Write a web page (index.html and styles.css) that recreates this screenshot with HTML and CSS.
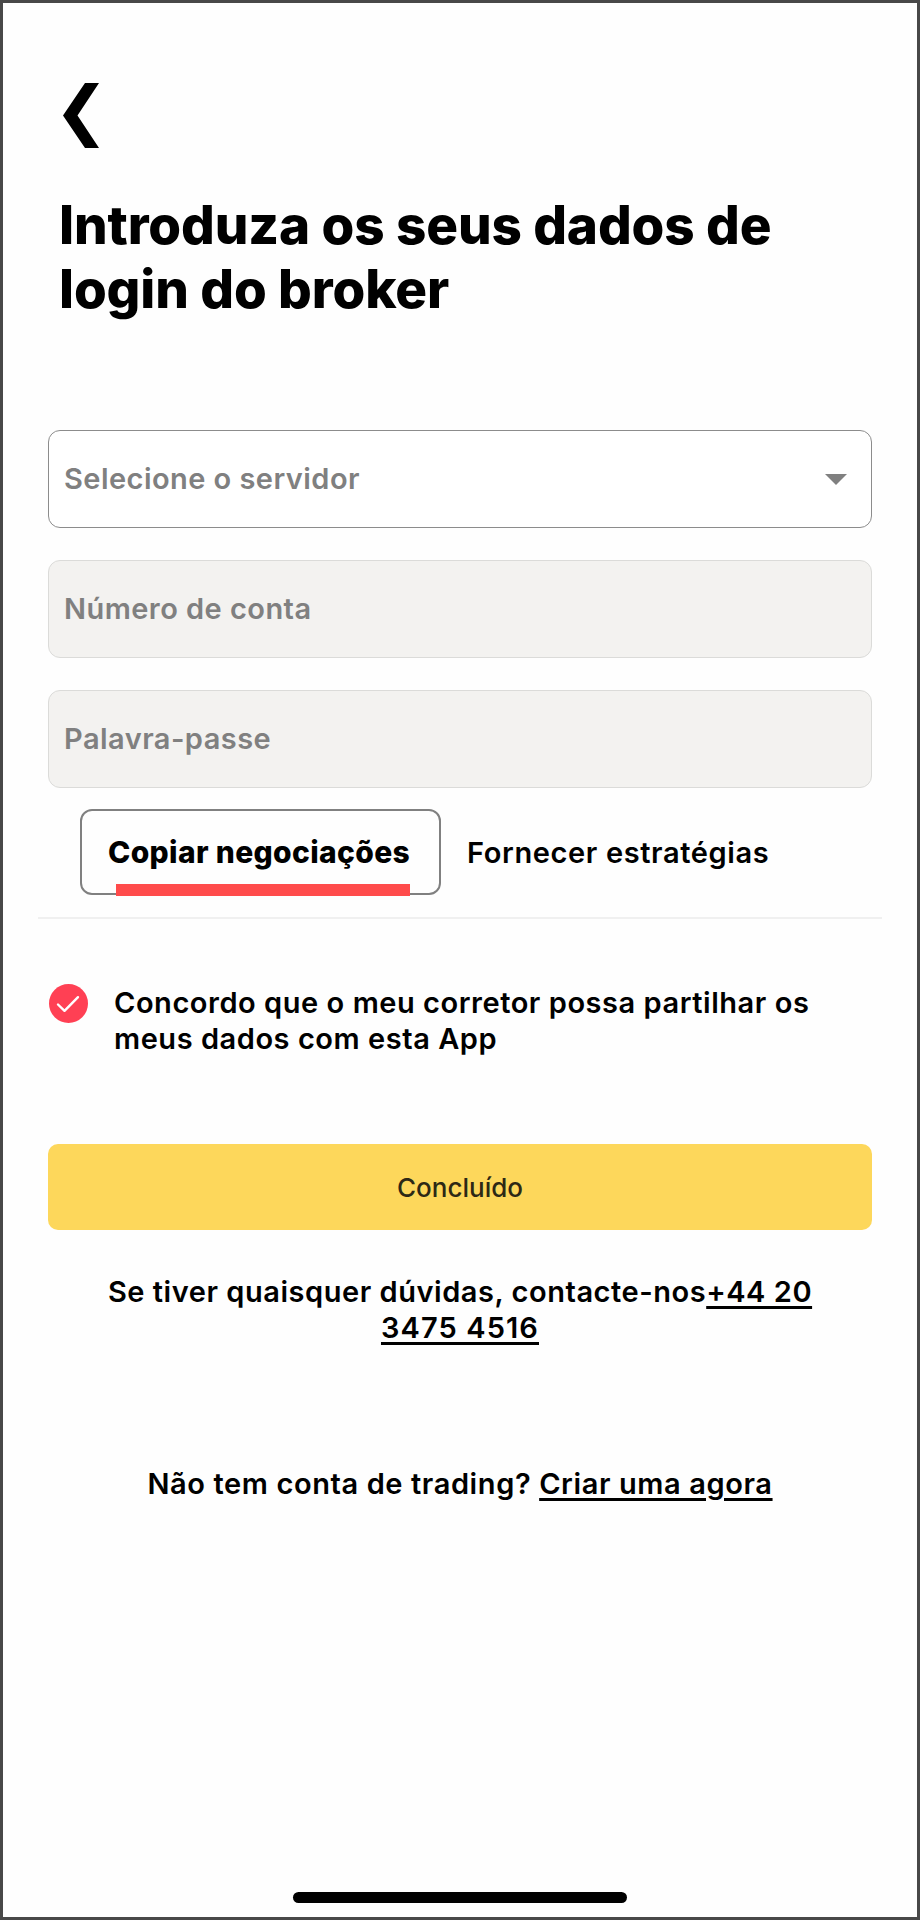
FILE: index.html
```
<!DOCTYPE html>
<html lang="pt">
<head>
    <meta charset="UTF-8">
    <meta name="viewport" content="width=device-width, initial-scale=1.0">
    <title>Login do broker</title>
    <link rel="stylesheet" href="styles.css">
</head>
<body>
    <div class="screen">
        <a class="back" aria-label="Voltar">
            <svg width="36" height="65" viewBox="0 0 36 65"><path d="M22 0H36L14.5 32.5L36 65H22L0 32.5Z"/></svg>
        </a>
        <h1>Introduza os seus dados de<br>login do broker</h1>

        <form class="form">
            <div class="field select">
                <span>Selecione o servidor</span>
                <svg width="22" height="11" viewBox="0 0 22 11"><path d="M0 0H22L11 11Z"/></svg>
            </div>
            <div class="field">Número de conta</div>
            <div class="field">Palavra-passe</div>
        </form>

        <div class="tabs">
            <div class="tab active">Copiar negociações</div>
            <div class="tab">Fornecer estratégias</div>
        </div>

        <div class="agree">
            <svg width="39" height="39" viewBox="0 0 39 39">
                <circle cx="19.5" cy="19.5" r="19.5"/>
                <path d="M9 20.5L15.5 26.8L29 13.2"/>
            </svg>
            <p>Concordo que o meu corretor possa partilhar os<br>meus dados com esta App</p>
        </div>

        <button class="done">Concluído</button>

        <p class="contact">Se tiver quaisquer dúvidas, contacte-nos<a>+44 20</a><br><a class="phone">3475 4516</a></p>
        <p class="create">Não tem conta de trading? <a>Criar uma agora</a></p>

        <div class="home-bar"></div>
    </div>
</body>
</html>
```
FILE: styles.css
```
* { box-sizing: border-box; }
body { margin: 0; font-family: Inter, sans-serif; font-size: 29px; font-weight: 600; line-height: 36px; letter-spacing: 0.54px; color: #000; }
h1, p { margin: 0; white-space: nowrap; }
.screen { display: flex; flex-direction: column; width: 920px; height: 1920px; padding: 80px 45px 0; border: 3px solid #484848; background: #fefefe; }
.back { height: 65px; margin-left: 15px; line-height: 0; }
h1 { margin: 45px 0 0 11px; font-size: 53px; font-weight: 800; line-height: 64px; letter-spacing: -0.12px; }

.form { display: flex; flex-direction: column; gap: 32px; margin-top: 109px; }
.field { display: flex; align-items: center; height: 98px; padding: 0 15px; border: 1px solid #dbdbd9; border-radius: 12px; background: #f3f2f0; color: #808080; letter-spacing: 0.45px; }
.select { justify-content: space-between; padding-right: 24px; border-color: #8c8c8c; background: #fff; }
.select svg { fill: #808080; }

.tabs { display: flex; height: 110px; margin: 21px -10px 0; padding-left: 42px; border-bottom: 2px solid #f0f0f0; }
.tab { height: 86px; padding: 26px 26px; white-space: nowrap; letter-spacing: 0.62px; }
.active { position: relative; width: 361px; border: 2px solid #808080; border-radius: 12px; font-size: 30px; font-weight: 800; padding: 23px 26px; letter-spacing: 0.35px; }
.active::after { content: ""; position: absolute; left: 34px; bottom: -3px; width: 294px; height: 12px; background: #ff4b4b; }

.agree { display: flex; margin: 65px 0 0 1px; }
.agree svg { fill: #ff4054; }
.agree svg path { fill: none; stroke: #fff; stroke-width: 2.4; stroke-linecap: round; stroke-linejoin: round; }
.agree p { margin: 1px 0 0 26px; }

.done { flex: none; height: 86px; margin-top: 87px; padding: 0; border: 0; border-radius: 10px; background: #fdd75b; color: #2d2815; font: 500 26px Inter, sans-serif; }
.contact { margin-top: 44px; text-align: center; }
.create { margin-top: 120px; text-align: center; letter-spacing: 0.6px; }
.contact a, .create a { text-decoration: underline; text-decoration-thickness: 2.5px; text-underline-offset: 4px; }
.contact .phone { letter-spacing: 1.1px; }
.home-bar { width: 334px; height: 11px; margin: auto auto 14px; border-radius: 6px; background: #000; }
```
